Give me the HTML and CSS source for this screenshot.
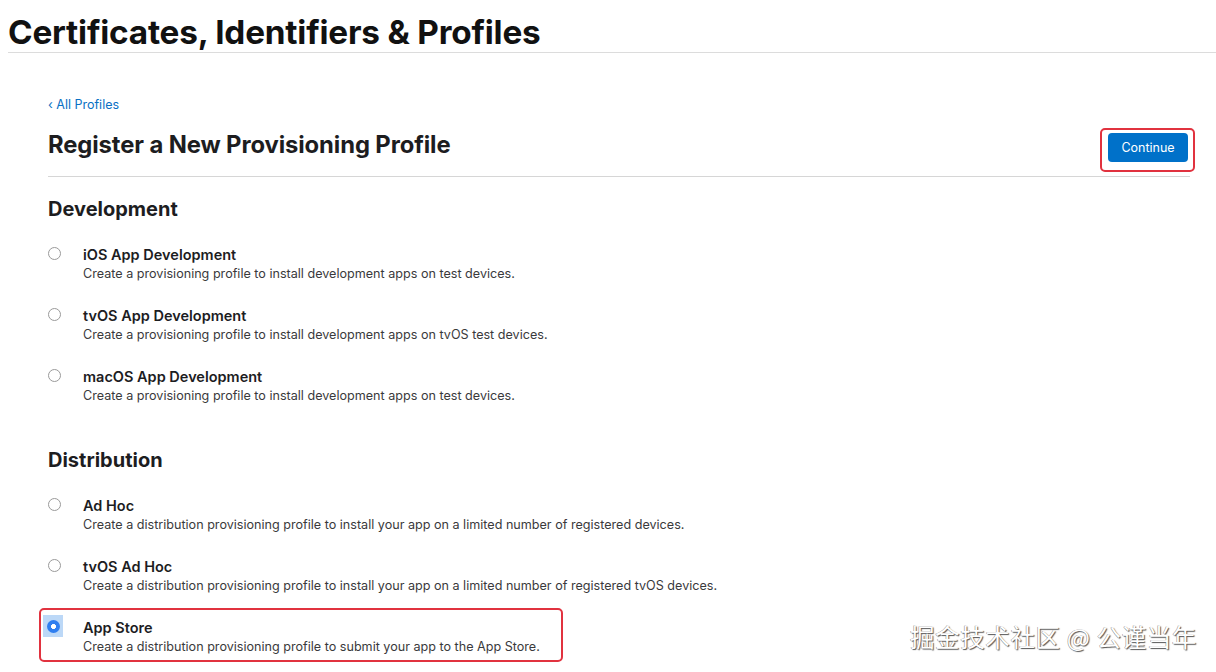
FILE: index.html
```html
<!DOCTYPE html>
<html lang="en">
<head>
<meta charset="utf-8">
<title>Register a New Provisioning Profile</title>
<link rel="stylesheet" href="styles.css">
</head>
<body>
<header class="top">
  <h1 class="top-title">Certificates, Identifiers &amp; Profiles</h1>
</header>
<main class="main">
  <a class="back" href="#">‹ All Profiles</a>
  <div class="head-row">
    <h2 class="page-title">Register a New Provisioning Profile</h2>
    <div class="highlight btn-wrap"><button class="btn">Continue</button></div>
  </div>

  <section class="group">
    <h3 class="group-title">Development</h3>
    <label class="option">
      <span class="radio"></span>
      <span class="text"><span class="name">iOS App Development</span><span class="desc">Create a provisioning profile to install development apps on test devices.</span></span>
    </label>
    <label class="option">
      <span class="radio"></span>
      <span class="text"><span class="name">tvOS App Development</span><span class="desc">Create a provisioning profile to install development apps on tvOS test devices.</span></span>
    </label>
    <label class="option">
      <span class="radio"></span>
      <span class="text"><span class="name">macOS App Development</span><span class="desc">Create a provisioning profile to install development apps on test devices.</span></span>
    </label>
  </section>

  <section class="group">
    <h3 class="group-title">Distribution</h3>
    <label class="option">
      <span class="radio"></span>
      <span class="text"><span class="name">Ad Hoc</span><span class="desc">Create a distribution provisioning profile to install your app on a limited number of registered devices.</span></span>
    </label>
    <label class="option">
      <span class="radio"></span>
      <span class="text"><span class="name">tvOS Ad Hoc</span><span class="desc">Create a distribution provisioning profile to install your app on a limited number of registered tvOS devices.</span></span>
    </label>
    <label class="option option-selected highlight">
      <span class="radio-sel"><span class="radio checked"></span></span>
      <span class="text"><span class="name">App Store</span><span class="desc">Create a distribution provisioning profile to submit your app to the App Store.</span></span>
    </label>
  </section>
</main>
<div class="watermark">掘金技术社区 @ 公谨当年</div>
</body>
</html>
```
FILE: styles.css
```css
* { box-sizing: border-box; }
html, body { margin: 0; padding: 0; background: #fff; }
body {
  font-family: Inter, "Noto Sans", "Liberation Sans", sans-serif;
  color: #1d1d1f;
  width: 1216px;
  height: 672px;
  overflow: hidden;
  position: relative;
}
.top {
  margin-left: 8px;
  border-bottom: 1px solid #dcdcdc;
  height: 53px;
  padding-top: 13px;
}
.top-title {
  margin: 0;
  font-size: 33.3px;
  line-height: 38px;
  font-weight: 700;
  letter-spacing: -0.2px;
  color: #111;
}
.main {
  padding: 44px 26px 0 48px;
}
.back {
  display: block;
  color: #0a70c4;
  text-decoration: none;
  font-size: 12.5px;
  line-height: 16px;
}
.head-row {
  display: flex;
  align-items: center;
  justify-content: space-between;
  border-bottom: 1px solid #d6d6d6;
  height: 64px;
}
.page-title {
  margin: 0;
  font-size: 23.8px;
  line-height: 30px;
  font-weight: 700;
  letter-spacing: -0.1px;
  color: #1d1d1f;
}
.btn-wrap {
  margin-right: -5px;
  margin-top: 11px;
  padding: 3px 5px 8px 6px;
}
.highlight {
  border: 2px solid #e1323f;
  border-radius: 5px;
}
.btn {
  display: block;
  background: #0071c9;
  color: #fff;
  border: 0;
  border-radius: 4px;
  font-family: inherit;
  font-size: 12.5px;
  width: 80px;
  height: 29px;
  padding: 0;
}
.group { margin-top: 20px; }
.group + .group { margin-top: 18px; }
.group-title {
  margin: 0 0 26px 0;
  font-size: 20px;
  line-height: 24px;
  font-weight: 700;
  color: #1d1d1f;
}
.option {
  display: flex;
  align-items: flex-start;
  height: 61px;
}
.radio {
  width: 13px;
  height: 13px;
  border: 1px solid #9a9a9a;
  border-radius: 50%;
  background: #fff;
  margin-top: 0;
  flex: none;
}
.text {
  display: flex;
  flex-direction: column;
  margin-left: 22px;
}
.name {
  font-size: 14.5px;
  line-height: 16px;
  font-weight: 600;
  color: #1d1d1f;
}
.desc {
  font-size: 12.6px;
  line-height: 16px;
  margin-top: 3px;
  color: #3a3a3c;
}
.option-selected {
  margin-left: -9px;
  margin-top: -12px;
  width: 524px;
  height: 54px;
  padding: 5px 0 0 2px;
}
.option-selected .text { margin-left: 20px; margin-top: 5px; }
.radio-sel {
  background: #bcd8f7;
  width: 20px;
  height: 22px;
  display: flex;
  align-items: center;
  justify-content: center;
  flex: none;
}
.radio.checked {
  margin: 0;
  border: 0;
  background: radial-gradient(circle, #fff 0 2.2px, #2f7ef0 2.8px);
}
.watermark {
  position: absolute;
  left: 910px;
  top: 620px;
  font-family: "Noto Sans CJK SC", sans-serif;
  font-size: 24.5px;
  line-height: 34px;
  color: #fff;
  text-shadow: 1px 1px 1px #555, -0.5px -0.5px 0.5px #888;
  letter-spacing: 0.6px;
}
```
